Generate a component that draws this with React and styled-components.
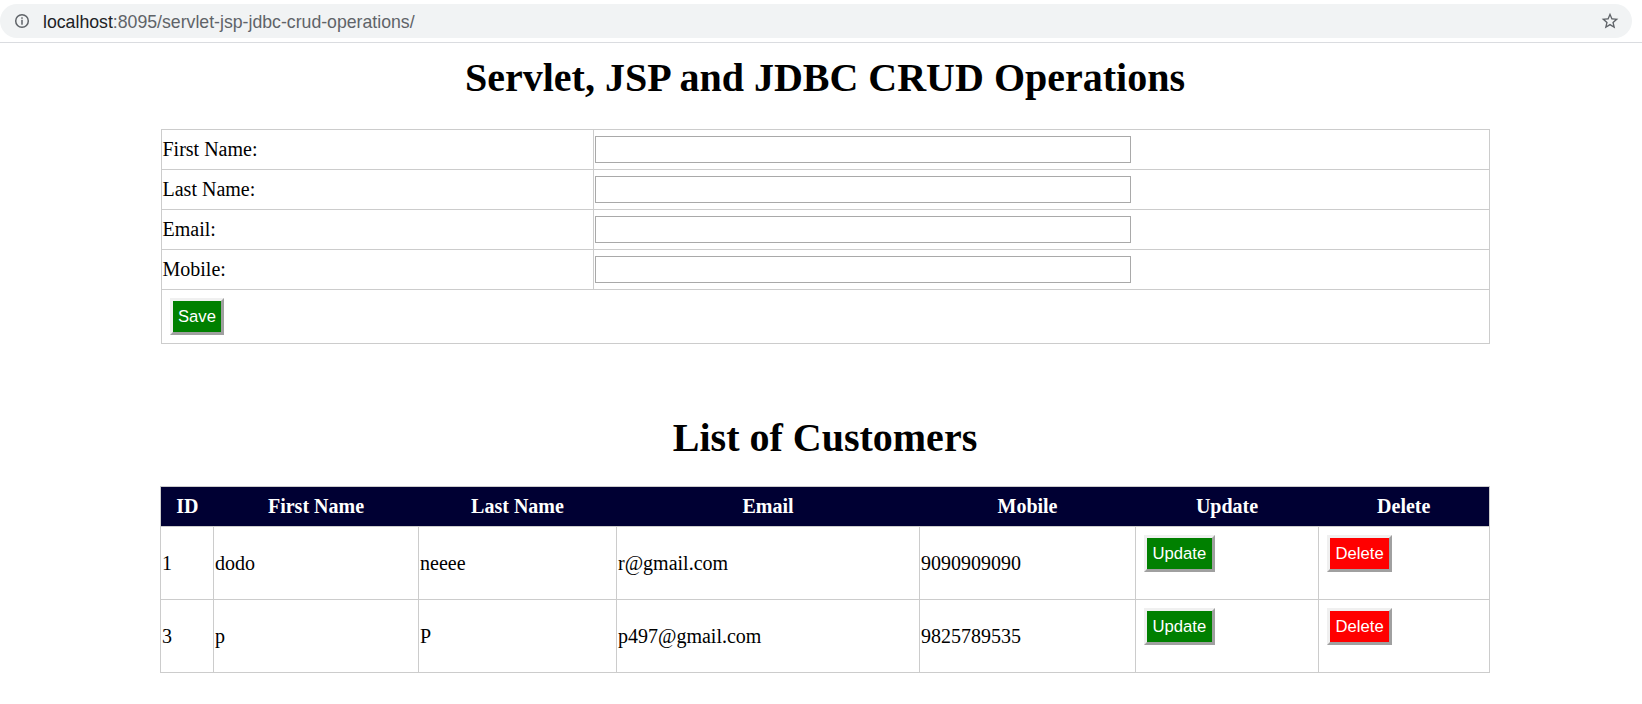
import React from "react";
import styled, { createGlobalStyle } from "styled-components";

const GlobalStyle = createGlobalStyle`
  html, body {
    margin: 0;
    padding: 0;
    background: #fff;
  }
  body {
    font-family: "Liberation Serif", "Times New Roman", serif;
    font-size: 20px;
    color: #000;
  }
`;

// barra do navegador
const Toolbar = styled.div`
  height: 42px;
  border-bottom: 1px solid #dadce0;
  display: flex;
  align-items: center;
  padding-right: 10px;
  background: #fff;
`;

const Omnibox = styled.div`
  flex: 1;
  height: 34px;
  border-radius: 17px;
  background: #f1f3f4;
  display: flex;
  align-items: center;
  padding: 0 12px 0 14px;
`;

const UrlText = styled.div`
  flex: 1;
  margin-left: 13px;
  padding-top: 2px;
  font-family: "Liberation Sans", Arial, sans-serif;
  font-size: 17.7px;
  color: #5f6368;
  white-space: nowrap;
`;

const Host = styled.span`
  color: #202124;
`;

const IconBox = styled.svg`
  display: block;
  flex: none;
  fill: #5f6368;
`;

const Page = styled.div`
  padding-left: 8px;
  padding-bottom: 30px;
`;

const Title = styled.h1`
  margin: ${(props) => props.$top}px 0 ${(props) => props.$bottom}px;
  font-size: 40px;
  line-height: 46px;
  font-weight: bold;
  text-align: center;
`;

const Table = styled.table`
  width: 1329px;
  margin: 0 auto;
  border-collapse: collapse;
  border: 1px solid #ccc;
  table-layout: fixed;
`;

const Tr = styled.tr`
  height: ${(props) => props.$height}px;
`;

//celula de cabecalho
const Th = styled.th`
  background: #000033;
  color: #fff;
  font-weight: bold;
  text-align: center;
  padding: 1px;
  border: none;
  border-top: 1px solid #ccc;
`;

//celula de dados
const Td = styled.td`
  border: 1px solid #ccc;
  padding: 1px;
  vertical-align: ${(props) => (props.$top ? "top" : "middle")};
  text-align: left;
`;

const TextInput = styled.input`
  box-sizing: border-box;
  width: 536px;
  height: 27px;
  margin: 0;
  border: 1px solid #a9a9a9;
  vertical-align: middle;
  background: #fff;
`;

const Button = styled.button`
  margin: 7px;
  padding: 6px 5.5px;
  border: 3px solid;
  border-color: #f0f0f0 #a0a0a0 #a0a0a0 #f0f0f0;
  background: ${(props) => (props.$danger ? "#ff0000" : "#008000")};
  color: #fff;
  font-family: "Liberation Sans", Arial, sans-serif;
  font-size: 16.67px;
  line-height: 19px;
  display: inline-block;
  cursor: pointer;
`;

const customers = [
  { id: 1, first: "dodo", last: "neeee", email: "r@gmail.com", mobile: "9090909090" },
  { id: 3, first: "p", last: "P", email: "p497@gmail.com", mobile: "9825789535" },
];

const fields = ["First Name:", "Last Name:", "Email:", "Mobile:"];

const InfoIcon = () => (
  <IconBox width="16" height="16" viewBox="0 0 16 16">
    <circle cx="8" cy="8" r="6.3" fill="none" stroke="#5f6368" strokeWidth="1.5" />
    <rect x="7.25" y="4.3" width="1.5" height="1.5" />
    <rect x="7.25" y="6.8" width="1.5" height="4.9" />
  </IconBox>
);

const StarIcon = () => (
  <IconBox width="20" height="20" viewBox="0 0 24 24">
    <path d="M22 9.24l-7.19-.62L12 2 9.19 8.63 2 9.24l5.46 4.73L5.82 21 12 17.27 18.18 21l-1.63-7.03L22 9.24zM12 15.4l-3.76 2.27 1-4.28-3.32-2.88 4.38-.38L12 6.1l1.71 4.04 4.38.38-3.32 2.88 1 4.28L12 15.4z" />
  </IconBox>
);

export default function App() {
  return (
    <>
      <GlobalStyle />
      <Toolbar>
        <Omnibox>
          <InfoIcon />
          <UrlText>
            <Host>localhost</Host>:8095/servlet-jsp-jdbc-crud-operations/
          </UrlText>
          <StarIcon />
        </Omnibox>
      </Toolbar>

      <Page>
        <Title $top={12} $bottom={28}>Servlet, JSP and JDBC CRUD Operations</Title>

        <Table>
          <colgroup>
            <col style={{ width: 432 }} />
            <col />
          </colgroup>
          <tbody>
            {fields.map((f) => (
              <Tr key={f} $height={40}>
                <Td>{f}</Td>
                <Td>
                  <TextInput type="text" />
                </Td>
              </Tr>
            ))}
            <Tr $height={53}>
              <Td colSpan={2} $top>
                <Button>Save</Button>
              </Td>
            </Tr>
          </tbody>
        </Table>

        <Title $top={71} $bottom={25}>List of Customers</Title>

        <Table>
          <colgroup>
            <col style={{ width: 53 }} />
            <col style={{ width: 205 }} />
            <col style={{ width: 198 }} />
            <col style={{ width: 303 }} />
            <col style={{ width: 216 }} />
            <col style={{ width: 183 }} />
            <col style={{ width: 171 }} />
          </colgroup>
          <thead>
            <Tr $height={40}>
              <Th>ID</Th>
              <Th>First Name</Th>
              <Th>Last Name</Th>
              <Th>Email</Th>
              <Th>Mobile</Th>
              <Th>Update</Th>
              <Th>Delete</Th>
            </Tr>
          </thead>
          <tbody>
            {customers.map((c) => (
              <Tr key={c.id} $height={73}>
                <Td>{c.id}</Td>
                <Td>{c.first}</Td>
                <Td>{c.last}</Td>
                <Td>{c.email}</Td>
                <Td>{c.mobile}</Td>
                <Td $top>
                  <Button>Update</Button>
                </Td>
                <Td $top>
                  <Button $danger>Delete</Button>
                </Td>
              </Tr>
            ))}
          </tbody>
        </Table>
      </Page>
    </>
  );
}
